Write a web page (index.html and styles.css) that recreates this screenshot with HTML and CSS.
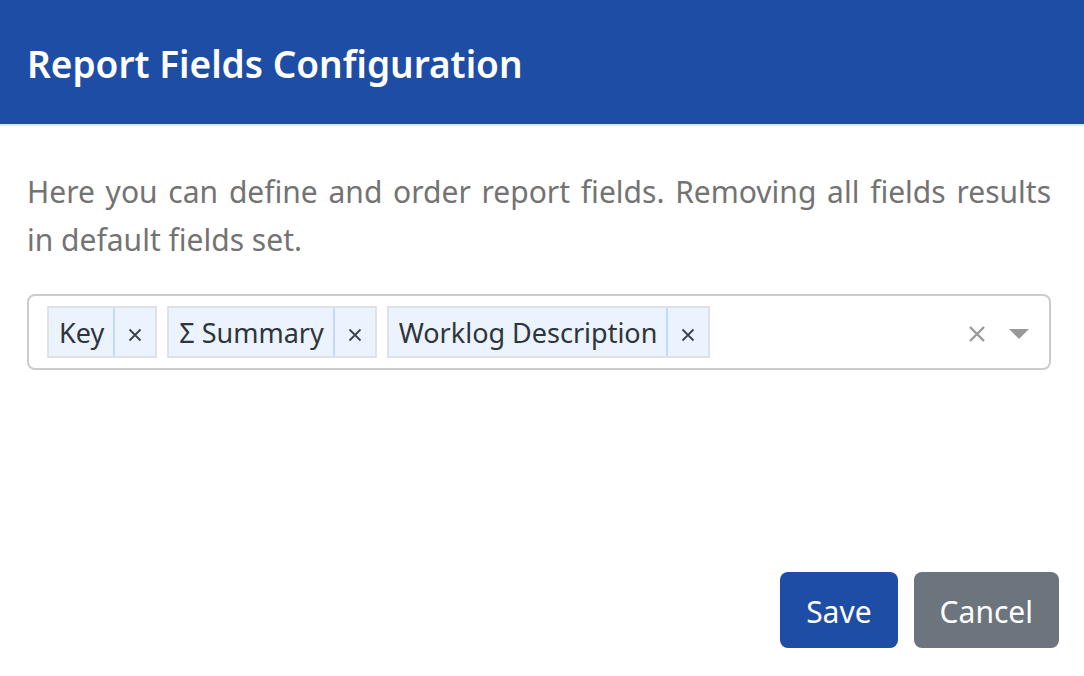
FILE: index.html
```html
<!DOCTYPE html>
<html lang="en">
<head>
<meta charset="utf-8">
<meta name="viewport" content="width=device-width, initial-scale=1">
<title>Report Fields Configuration</title>
<link rel="stylesheet" href="styles.css">
</head>
<body>
<main class="dialog">
  <header class="dialog-header">
    <h1 class="dialog-title">Report Fields Configuration</h1>
  </header>
  <section class="dialog-body">
    <p class="description">Here you can define and order report fields. Removing all fields results in default fields set.</p>
    <div class="select" role="group" aria-label="Report fields">
      <ul class="chips">
        <li class="chip"><span class="chip-label">Key</span><button class="chip-remove" type="button" aria-label="Remove Key"><svg width="14" height="14" viewBox="0 0 14 14"><path d="M1.5 1.5 12.5 12.5M12.5 1.5 1.5 12.5"/></svg></button></li>
        <li class="chip"><span class="chip-label">Σ Summary</span><button class="chip-remove" type="button" aria-label="Remove Summary"><svg width="14" height="14" viewBox="0 0 14 14"><path d="M1.5 1.5 12.5 12.5M12.5 1.5 1.5 12.5"/></svg></button></li>
        <li class="chip"><span class="chip-label">Worklog Description</span><button class="chip-remove" type="button" aria-label="Remove Worklog Description"><svg width="14" height="14" viewBox="0 0 14 14"><path d="M1.5 1.5 12.5 12.5M12.5 1.5 1.5 12.5"/></svg></button></li>
      </ul>
      <button class="select-action" type="button" aria-label="Clear all"><svg width="16" height="16" viewBox="0 0 16 16"><path class="clear-icon" d="M1 1 15 15M15 1 1 15"/></svg></button>
      <button class="select-action" type="button" aria-label="Open list"><svg width="20" height="10" viewBox="0 0 20 10"><path class="arrow-icon" d="M0 0H20L10 10Z"/></svg></button>
    </div>
  </section>
  <footer class="dialog-footer">
    <button class="button button-primary" type="button">Save</button>
    <button class="button button-secondary" type="button">Cancel</button>
  </footer>
</main>
</body>
</html>
```
FILE: styles.css
```css
* { box-sizing: border-box; }

body {
  margin: 0;
  background: #fff;
  color: #2f353a;
  font-family: "Segoe UI", "Noto Sans", sans-serif;
  font-size: 30px;
  line-height: 48px;
}

button {
  margin: 0;
  padding: 0;
  border: 0;
  background: none;
  color: inherit;
  font: inherit;
  cursor: pointer;
}

.dialog {
  display: flex;
  flex-direction: column;
  min-height: 100vh;
}

.dialog-header {
  padding: 40px 27px 36px;
  border-bottom: 2px solid #dee5f2;
  background: #1e4da5;
  background-clip: padding-box;
  color: #fff;
}

.dialog-title {
  margin: 0;
  font-size: 37px;
  font-weight: 600;
  line-height: 48px;
}

.dialog-body {
  flex: 1;
  padding: 42px 33px 28px 27px;
}

.description {
  margin: 0 0 30px;
  color: #737373;
  text-align: justify;
}

.select {
  display: flex;
  align-items: center;
  min-height: 76px;
  padding: 10px 20px 10px 18px;
  border: 2px solid #ccc;
  border-radius: 8px;
}

.chips {
  display: flex;
  flex: 1;
  flex-wrap: wrap;
  gap: 10px;
  margin: 0;
  padding: 0;
  list-style: none;
}

.chip {
  display: flex;
  border: 2px solid #dee2e6;
  background: #ebf3ff;
  font-size: 27px;
}

.chip-label {
  padding: 2px 9px 0 10px;
  line-height: 46px;
}

.chip-remove {
  display: flex;
  align-items: center;
  justify-content: center;
  width: 42px;
  padding-top: 6px;
  border-left: 2px solid #c2dbfc;
}

.chip-remove path {
  fill: none;
  stroke: #3c4248;
  stroke-width: 1.8;
}

.select-action {
  display: flex;
  margin-left: 24px;
  padding-top: 4px;
}

.clear-icon {
  fill: none;
  stroke: #999;
  stroke-width: 2.4;
}

.arrow-icon {
  fill: #999;
}

.dialog-footer {
  display: flex;
  justify-content: flex-end;
  gap: 16px;
  padding: 0 25px 28px;
}

.button {
  padding: 16px 26px 12px;
  border-radius: 8px;
  color: #fff;
}

.button-primary { background: #1e4da5; }
.button-secondary { background: #6c757d; }
```
